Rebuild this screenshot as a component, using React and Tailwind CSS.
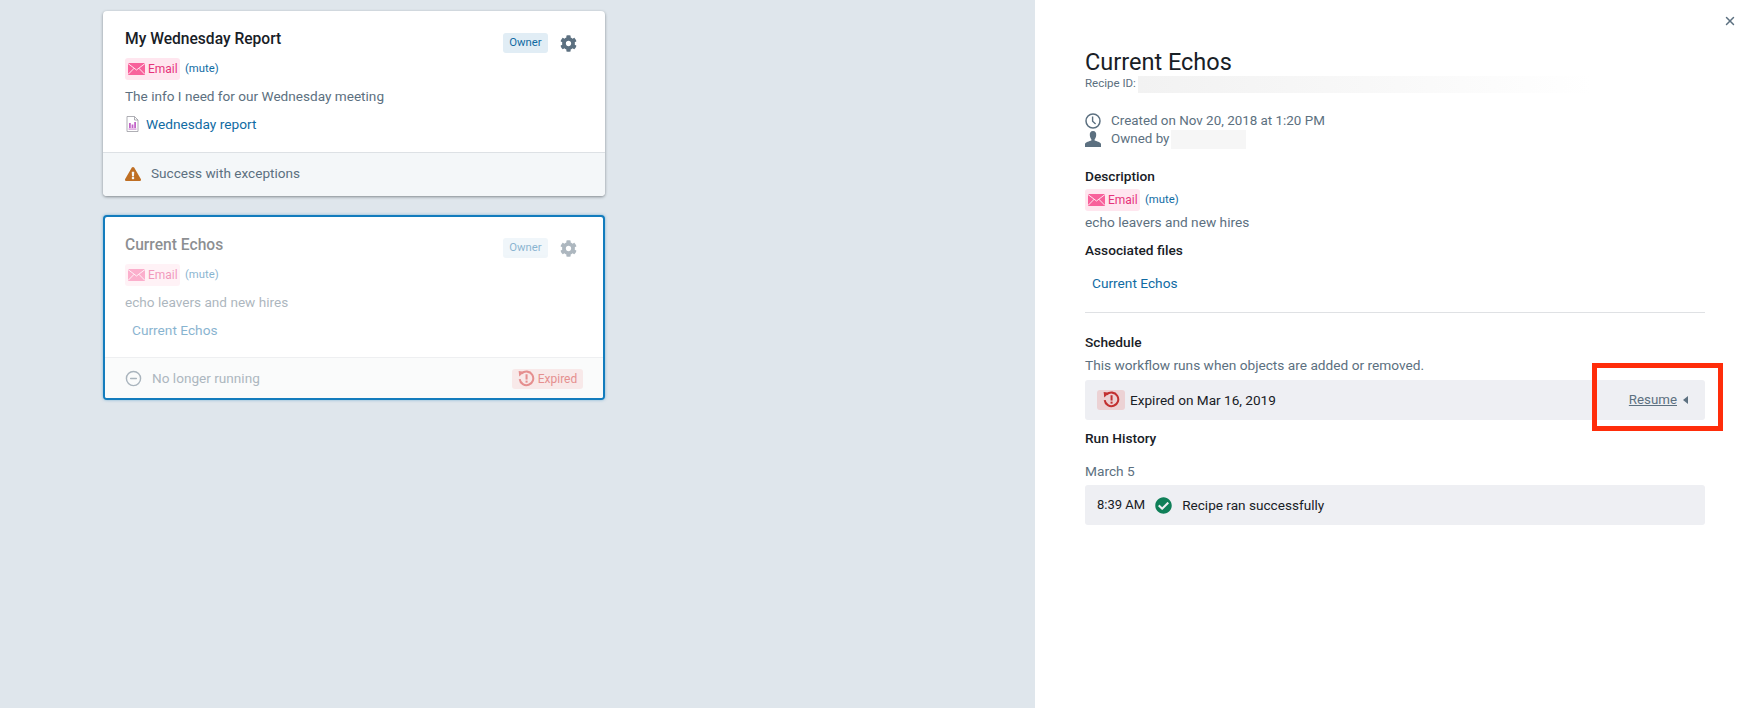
import React from 'react';
import { FaCog, FaCheckCircle, FaExclamationTriangle } from 'react-icons/fa';
import { X, CircleMinus } from 'lucide-react';

const EnvelopeIcon = ({ className }) => (
  <svg viewBox="0 0 17 12" className={className}>
    <rect x="0" y="0" width="17" height="12" fill="#f8619b" />
    <path d="M0 0.5 L8.5 7 L17 0.5 M0 11.5 L6.2 5.2 M17 11.5 L10.8 5.2" fill="none" stroke="#ffe6ef" strokeWidth="1" />
  </svg>
);

const ExpiredIcon = ({ color, className }) => (
  <svg viewBox="0 0 16 16" className={className}>
    <path d="M3.4 3.4 A6.4 6.4 0 1 1 1.6 8.6" fill="none" stroke={color} strokeWidth="1.9" />
    <path d="M0.6 1 L6 1.6 L1.2 6.2 Z" fill={color} />
    <rect x="7.1" y="4" width="1.9" height="5" fill={color} />
    <rect x="7.1" y="10" width="1.9" height="1.9" fill={color} />
  </svg>
);

const ReportIcon = () => (
  <svg viewBox="0 0 12 16" className="w-[13px] h-[16px]">
    <path d="M0.5 0.5 H8 L11.5 4 V15.5 H0.5 Z" fill="#fff" stroke="#9a9aa2" strokeWidth="0.8" />
    <path d="M8 0.5 V4 H11.5" fill="none" stroke="#9a9aa2" strokeWidth="0.8" />
    <rect x="2.5" y="7" width="1.8" height="5" fill="#c264c8" />
    <rect x="5.1" y="8.5" width="1.8" height="3.5" fill="#c264c8" />
    <rect x="7.7" y="6" width="1.8" height="6" fill="#c264c8" />
    <rect x="2" y="12.6" width="8" height="0.9" fill="#c264c8" />
  </svg>
);

const ClockIcon = () => (
  <svg viewBox="0 0 16 16" className="w-[16px] h-[16px]">
    <circle cx="8" cy="8" r="7" fill="none" stroke="#5c7080" strokeWidth="1.5" />
    <path d="M7.6 3.5 V8.3 L10.6 11" fill="none" stroke="#5c7080" strokeWidth="1.4" />
  </svg>
);

const PersonIcon = () => (
  <svg viewBox="0 0 16 16" className="w-[16px] h-[16px]">
    <path d="M8 0 C10.4 0 11.4 1.8 11.2 4.2 C11 6.4 10.2 7.6 9.6 8.4 V9.6 C11.4 10.4 15.6 11 16 13 V16 H0 V13 C0.4 11 4.6 10.4 6.4 9.6 V8.4 C5.8 7.6 5 6.4 4.8 4.2 C4.6 1.8 5.6 0 8 0 Z" fill="#5c7080" />
  </svg>
);

const EmailBadge = () => (
  <span className="flex items-center gap-[3px] w-[55px] h-[22px] pl-[3px] rounded-[3px] bg-[#ffe6ef] text-[#e6337a] text-[12px]">
    <EnvelopeIcon className="w-[17px] h-[12px] shrink-0" />
    Email
  </span>
);

const Card = ({ title, desc, link, showIcon, selected, footer }) => (
  <div className={`w-[502px] h-[185px] flex flex-col rounded-[4px] bg-white overflow-hidden ${selected ? 'border-2 border-[#137cbd] shadow-[0_0_3px_rgba(19,124,189,0.5)]' : 'shadow-[0_1px_3px_rgba(16,22,26,0.45)]'}`}>
    <div className={`flex-1 flex pt-[10px] ${selected ? 'px-[20px] opacity-50' : 'px-[22px]'}`}>
      <div className="flex-1">
        <div className="h-[36px] mt-[1px] flex items-center text-[15.6px] font-medium text-[#182026]">{title}</div>
        <div className="h-[22px] flex items-center gap-[5px]">
          <EmailBadge />
          <span className="text-[11.3px] text-[#106ba3]">(mute)</span>
        </div>
        <div className="h-[33px] flex items-center text-[13.6px] text-[#5c7080]">{desc}</div>
        <div className={`h-[22px] flex items-center gap-[7px] text-[13.7px] text-[#106ba3] ${showIcon ? 'pl-[1px]' : 'pl-[7px]'}`}>
          {showIcon && <ReportIcon />}
          {link}
        </div>
      </div>
      <div className={`flex items-start gap-[12px] pr-[6px] ${selected ? 'pt-[11px]' : 'pt-[12px]'}`}>
        <span className="h-[20px] w-[45px] flex items-center justify-center rounded-[3px] bg-[#e1edf5] text-[11.3px] text-[#106ba3]">Owner</span>
        <FaCog className="w-[17px] h-[17px] mt-[2px] text-[#5c7080]" />
      </div>
    </div>
    {footer}
  </div>
);

const Label = ({ className, children }) => (
  <div className={`flex items-center text-[13.7px] font-medium text-[#182026] ${className}`}>{children}</div>
);

export default function App() {
  return (
    <div className="relative flex w-[1755px] h-[708px] overflow-hidden [font-family:Roboto,sans-serif]">
      <div className="w-[1035px] h-full bg-[#dfe6ec] pt-[11px] pl-[103px] flex flex-col gap-[19px]">
        <Card
          title="My Wednesday Report"
          desc="The info I need for our Wednesday meeting"
          link="Wednesday report"
          showIcon
          footer={
            <div className="h-[44px] pb-[2px] flex items-center gap-[10px] pl-[22px] border-t border-[#dde1e5] bg-[#f4f7f9] text-[13.6px] text-[#5c7080]">
              <FaExclamationTriangle className="w-[16px] h-[16px] text-[#bf6f24]" />
              Success with exceptions
            </div>
          }
        />
        <Card
          selected
          title="Current Echos"
          desc="echo leavers and new hires"
          link="Current Echos"
          footer={
            <div className="h-[41px] pt-[1px] flex items-center justify-between px-[20px] border-t border-[#eeeff1] bg-[#fafbfb] text-[13.6px]">
              <span className="flex items-center gap-[10px]">
                <CircleMinus className="w-[17px] h-[17px] text-[#a9b4bd]" strokeWidth={2} />
                <span className="text-[#adb7bf]">No longer running</span>
              </span>
              <span className="flex items-center justify-center gap-[3px] w-[71px] h-[20px] rounded-[3px] bg-[#f8e9e9] text-[12px] text-[#e58f8f]">
                <ExpiredIcon color="#e58f8f" className="w-[17px] h-[17px]" />
                Expired
              </span>
            </div>
          }
        />
      </div>

      <div className="relative flex-1 h-full bg-white px-[50px] pt-[49px]">
        <button className="absolute top-[14px] right-[18px] text-[#5c7080]">
          <X className="w-[14px] h-[14px]" strokeWidth={2.5} />
        </button>
        <div className="h-[28px] flex items-center text-[23.5px] text-[#182026]">Current Echos</div>
        <div className="h-[18px] mt-[-2px] flex items-center text-[11.5px] text-[#5c7080]">
          Recipe ID:
          <span className="ml-[2px] w-[454px] h-[17px] bg-gradient-to-r from-[#f2f2f2] via-[#f8f8f8] to-white" />
        </div>
        <div className="h-[18px] mt-[19px] flex items-center gap-[10px] text-[13.4px] text-[#5c7080]">
          <ClockIcon />
          Created on Nov 20, 2018 at 1:20 PM
        </div>
        <div className="h-[18px] flex items-center gap-[10px] text-[13.4px] text-[#5c7080]">
          <PersonIcon />
          Owned by
          <span className="ml-[-8px] w-[75px] h-[19px] bg-[#f6f6f6]" />
        </div>
        <Label className="h-[18px] mt-[19px]">Description</Label>
        <div className="h-[22px] mt-[4px] flex items-center gap-[5px]">
          <EmailBadge />
          <span className="text-[11.3px] text-[#106ba3]">(mute)</span>
        </div>
        <div className="h-[20px] mt-[1px] flex items-center text-[13.7px] text-[#5c7080]">echo leavers and new hires</div>
        <Label className="h-[18px] mt-[9px]">Associated files</Label>
        <div className="h-[20px] mt-[14px] pl-[7px] flex items-center text-[13.7px] text-[#106ba3]">Current Echos</div>
        <div className="h-px mt-[19px] bg-[#dfe1e4]" />
        <Label className="h-[18px] mt-[20px]">Schedule</Label>
        <div className="h-[20px] mt-[4px] flex items-center text-[13.7px] text-[#5c7080]">This workflow runs when objects are added or removed.</div>
        <div className="h-[40px] mt-[5px] flex items-center justify-between rounded-[3px] bg-[#eeeff3] pl-[12px] pr-[17px]">
          <span className="flex items-center gap-[5px] text-[13.6px] text-[#182026]">
            <span className="w-[28px] h-[20px] flex items-center justify-center rounded-[3px] bg-[#ecd2d4]">
              <ExpiredIcon color="#c23030" className="w-[17px] h-[17px]" />
            </span>
            Expired on Mar 16, 2019
          </span>
          <span className="flex items-center gap-[6px] text-[13.3px] text-[#5c7080]">
            <span className="underline">Resume</span>
            <span className="w-0 h-0 border-y-[4px] border-y-transparent border-r-[5px] border-r-[#5c7080]" />
          </span>
        </div>
        <Label className="h-[18px] mt-[9px]">Run History</Label>
        <div className="h-[20px] mt-[14px] flex items-center text-[13.7px] text-[#5c7080]">March 5</div>
        <div className="h-[40px] mt-[4px] flex items-center gap-[10px] rounded-[3px] bg-[#eeeff3] pl-[12px] text-[13.6px] text-[#182026]">
          <span className="text-[13px]">8:39 AM</span>
          <FaCheckCircle className="w-[17px] h-[17px] text-[#0f7f58]" />
          Recipe ran successfully
        </div>
      </div>

      {/* annotation drawn over the screenshot */}
      <div className="absolute left-[1592px] top-[363px] w-[131px] h-[68px] border-[5px] border-[#ff2d0a]" />
    </div>
  );
}
